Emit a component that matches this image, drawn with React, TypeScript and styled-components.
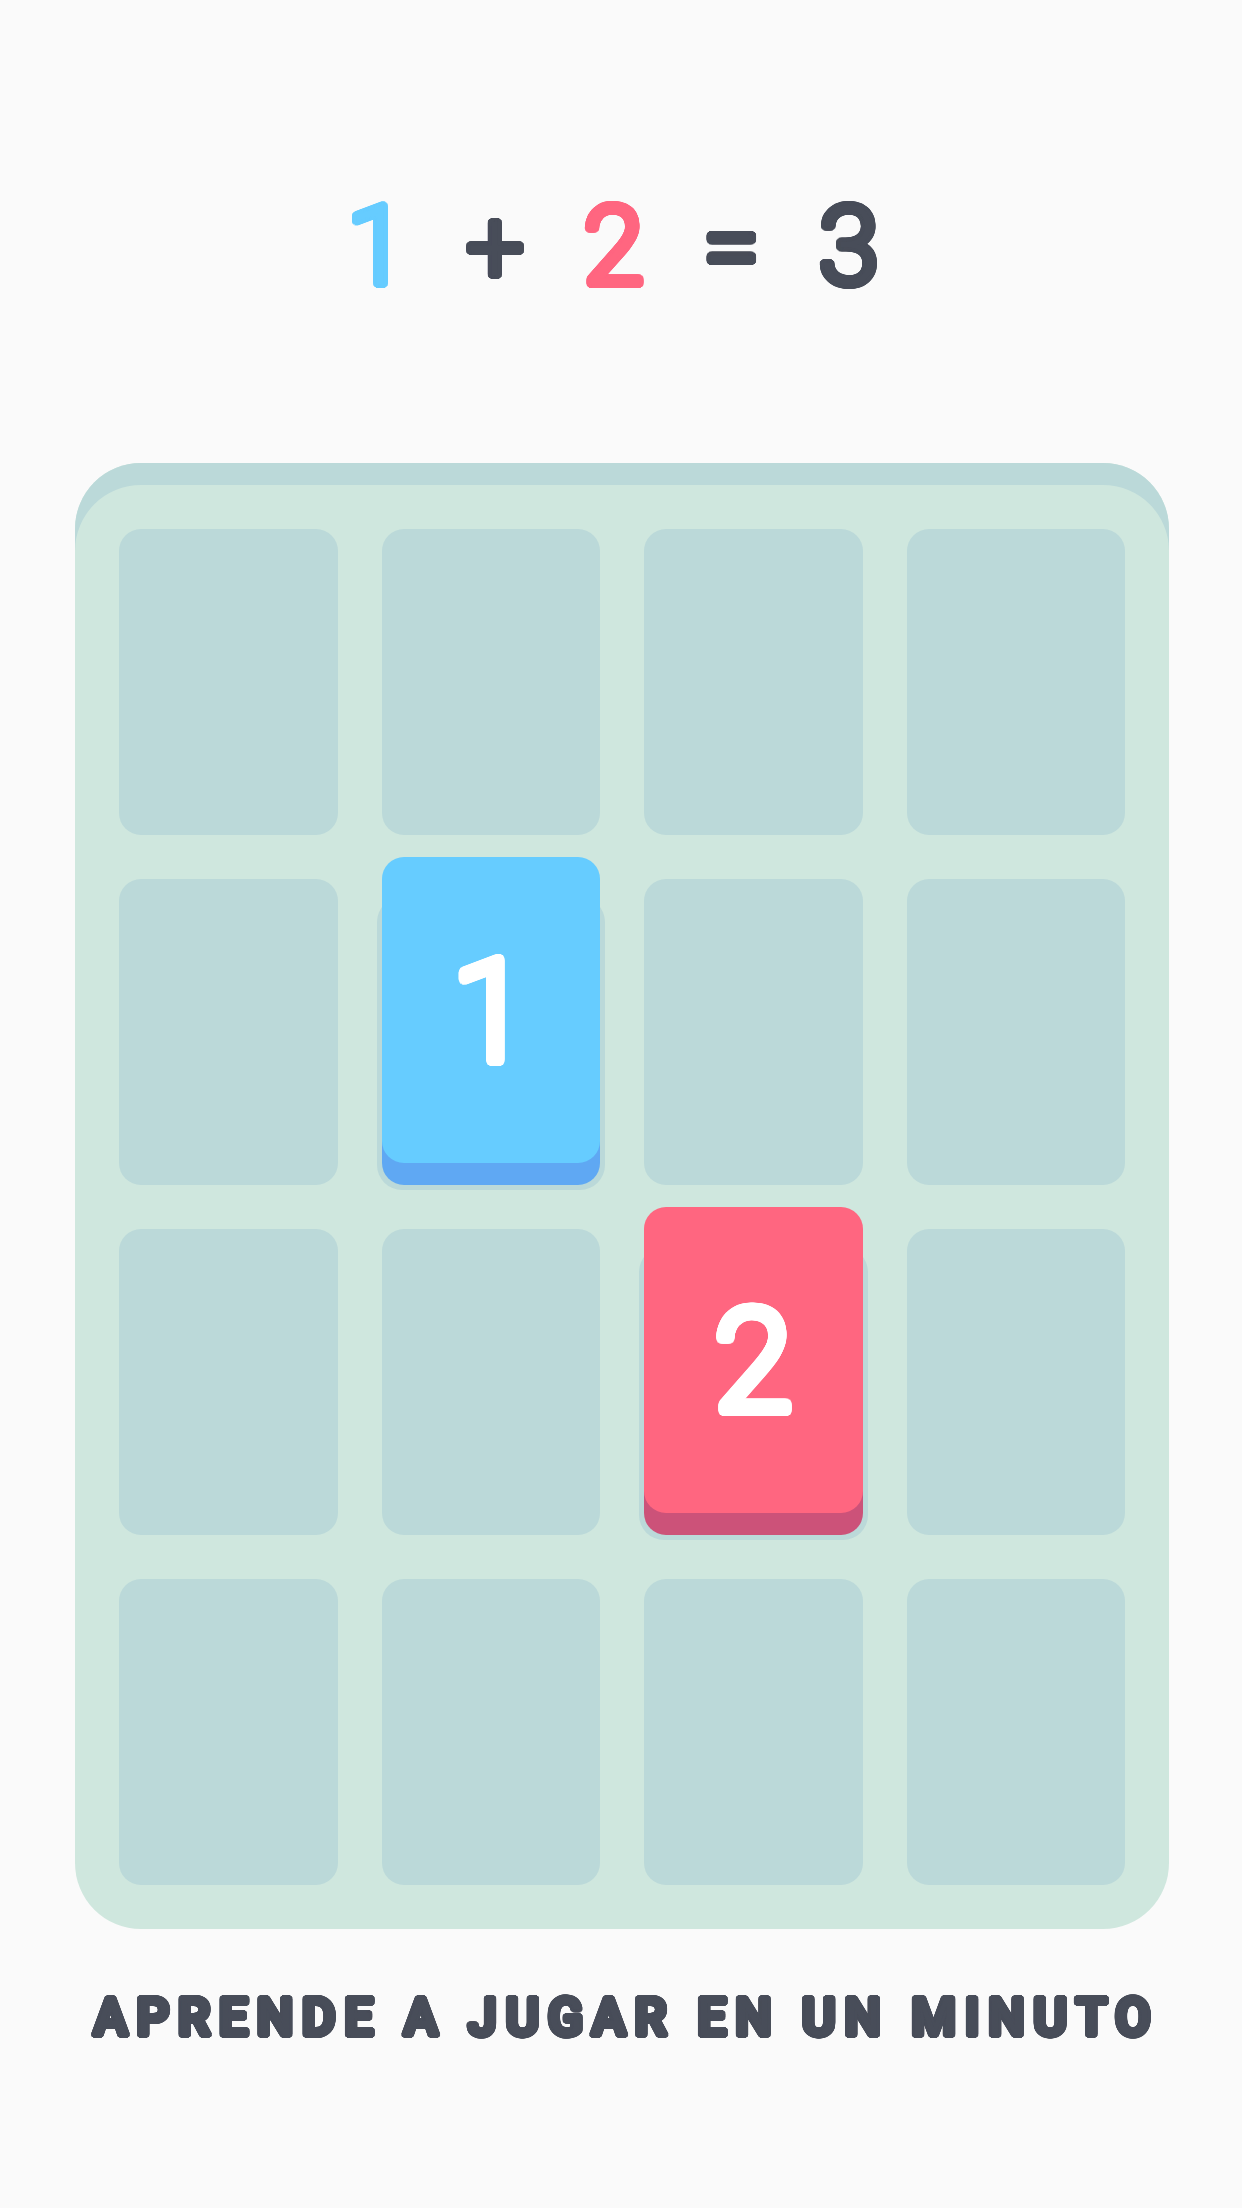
import React from 'react';
import styled, { createGlobalStyle } from 'styled-components';

type CardKind = 'one' | 'two';

const colors = {
  page: '#fafafa',
  ink: '#484d59',
  board: '#cfe7de',
  slot: '#bbd9d9',
  one: '#66ccff',
  oneSide: '#5fa8f3',
  two: '#ff6680',
  twoSide: '#cc5279',
};

const cardColors: Record<CardKind, { face: string; side: string }> = {
  one: { face: colors.one, side: colors.oneSide },
  two: { face: colors.two, side: colors.twoSide },
};

// Fattens the glyphs evenly in all directions, which gives them round ends.
const rounded = (radius: number) =>
  Array.from({ length: 32 }, (_, i) => {
    const angle = (i * Math.PI) / 16;
    const x = (Math.cos(angle) * radius).toFixed(2);
    const y = (Math.sin(angle) * radius).toFixed(2);
    return `${x}px ${y}px 0 currentColor`;
  }).join(', ');

const GlobalStyle = createGlobalStyle`
  * {
    box-sizing: border-box;
  }
  body {
    margin: 0;
    background: ${colors.page};
    color: ${colors.ink};
    font-family: Roboto, "Liberation Sans", sans-serif;
  }
`;

const Page = styled.main`
  display: flex;
  flex-direction: column;
  min-height: 100vh;
  padding: 182px 73px 0 75px;
`;

const Equation = styled.h1`
  display: flex;
  justify-content: center;
  gap: 59px;
  margin: 0 0 151px;
  padding-right: 18px;
  font-size: 110px;
  font-weight: 300;
  line-height: 130px;
  text-shadow: ${rounded(4)};
`;

const Term = styled.span<{ $color?: string }>`
  color: ${e => e.$color || colors.ink};
`;

const Operator = styled.span`
  font-size: 102px;
`;

const Board = styled.section`
  display: grid;
  grid-template-columns: repeat(4, 1fr);
  gap: 44px;
  padding: 66px 44px 44px;
  border-radius: 66px;
  background: ${colors.board};
  box-shadow: inset 0 22px 0 ${colors.slot};
`;

const Slot = styled.div`
  position: relative;
  aspect-ratio: 5 / 7;
  border-radius: 22px;
  background: ${colors.slot};
`;

const CardShadow = styled.div`
  position: absolute;
  inset: 18px -5px -5px;
  border-radius: 25px;
  background: ${colors.slot};
`;

const Card = styled.div<{ $kind: CardKind }>`
  position: absolute;
  inset: -22px 0 22px;
  display: flex;
  align-items: center;
  justify-content: center;
  padding-top: 6px;
  border-radius: 22px;
  background: ${e => cardColors[e.$kind].face};
  box-shadow: 0 22px 0 ${e => cardColors[e.$kind].side};
  color: #fff;
  font-size: 142px;
  font-weight: 300;
  line-height: 168px;
  text-shadow: ${rounded(5)};
`;

const Caption = styled.p`
  margin: 54px 0 0;
  padding-left: 9px;
  font-size: 51px;
  font-weight: 500;
  letter-spacing: 9px;
  line-height: 70px;
  text-align: center;
  white-space: nowrap;
  text-shadow: ${rounded(3)};
`;

const cards: Record<number, { kind: CardKind; value: number }> = {
  5: { kind: 'one', value: 1 },
  10: { kind: 'two', value: 2 },
};

const App: React.FunctionComponent = () => (
  <>
    <GlobalStyle />
    <Page>
      <Equation>
        <Term $color={colors.one}>1</Term>
        <Operator>+</Operator>
        <Term $color={colors.two}>2</Term>
        <Operator>=</Operator>
        <Term>3</Term>
      </Equation>
      <Board>
        {Array.from({ length: 16 }, (_, i) => (
          <Slot key={i}>
            {cards[i] && (
              <>
                <CardShadow />
                <Card $kind={cards[i].kind}>{cards[i].value}</Card>
              </>
            )}
          </Slot>
        ))}
      </Board>
      <Caption>APRENDE A JUGAR EN UN MINUTO</Caption>
    </Page>
  </>
);

export default App;
